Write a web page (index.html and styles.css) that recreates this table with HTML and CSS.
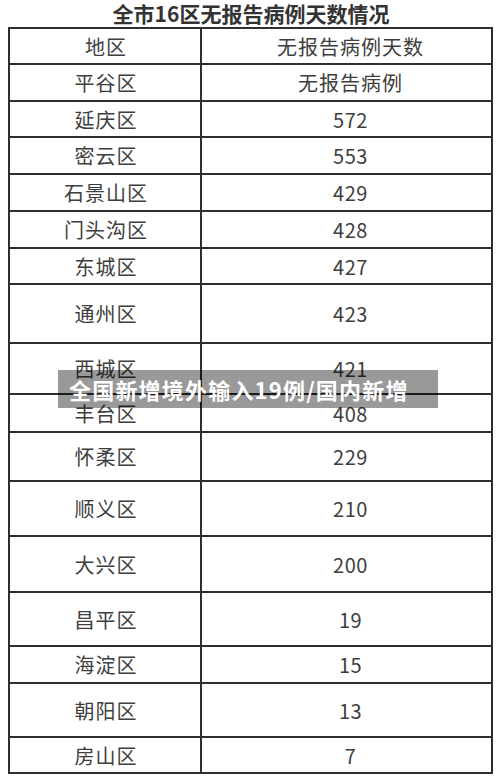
FILE: index.html
```html
<!DOCTYPE html>
<html lang="zh-CN">
<head>
<meta charset="utf-8">
<title>全市16区无报告病例天数情况</title>
<link rel="stylesheet" href="styles.css">
</head>
<body>
<div class="page">
  <h1 class="title">全市16区无报告病例天数情况</h1>
  <div class="table">
    <div class="cell name">地区</div><div class="cell val">无报告病例天数</div>
    <div class="cell name">平谷区</div><div class="cell val">无报告病例</div>
    <div class="cell name">延庆区</div><div class="cell val num">572</div>
    <div class="cell name">密云区</div><div class="cell val num">553</div>
    <div class="cell name">石景山区</div><div class="cell val num">429</div>
    <div class="cell name">门头沟区</div><div class="cell val num">428</div>
    <div class="cell name">东城区</div><div class="cell val num">427</div>
    <div class="cell name">通州区</div><div class="cell val num">423</div>
    <div class="cell name">西城区</div><div class="cell val num">421</div>
    <div class="cell name">丰台区</div><div class="cell val num">408</div>
    <div class="cell name">怀柔区</div><div class="cell val num">229</div>
    <div class="cell name">顺义区</div><div class="cell val num">210</div>
    <div class="cell name">大兴区</div><div class="cell val num">200</div>
    <div class="cell name">昌平区</div><div class="cell val num">19</div>
    <div class="cell name">海淀区</div><div class="cell val num">15</div>
    <div class="cell name">朝阳区</div><div class="cell val num">13</div>
    <div class="cell name last">房山区</div><div class="cell val num last">7</div>
  </div>
  <div class="caption">全国新增境外输入19例/国内新增</div>
</div>
</body>
</html>
```

FILE: styles.css
```css
* { box-sizing: border-box; }
html, body {
  margin: 0;
  padding: 0;
  background: #ffffff;
}
body {
  font-family: "Noto Sans CJK SC", "Noto Sans", sans-serif;
  color: #3c3c3c;
}
.page {
  position: relative;
  width: 500px;
  height: 780px;
  overflow: hidden;
}
.title {
  margin: 0;
  height: 27px;
  font-size: 21px;
  line-height: 27px;
  font-weight: 700;
  text-align: center;
  color: #333333;
  padding-left: 2px;
}
.table {
  margin-left: 8px;
  width: 485px;
  border: 2px solid #2e2e2e;
  display: grid;
  grid-template-columns: 192px 1fr;
  grid-template-rows: 36px 37px 36px 37px 37px 37px 36px 59px 51px 38px 49px 55px 56px 54px 37px 54px 34px;
}
.cell {
  display: flex;
  align-items: center;
  justify-content: center;
  border-bottom: 2px solid #2e2e2e;
  font-size: 20px;
  color: #3e3e3e;
  letter-spacing: 1px;
}
.name {
  border-right: 2px solid #2e2e2e;
  padding-left: 2px;
}
.val {
  padding-left: 8px;
}
.num {
  letter-spacing: 0.5px;
}
.cell.last {
  border-bottom: none;
}
.caption {
  position: absolute;
  left: 58px;
  top: 370px;
  width: 380px;
  height: 38px;
  padding-left: 11px;
  background: rgba(0, 0, 0, 0.4);
  color: #ffffff;
  font-size: 22px;
  font-weight: 700;
  line-height: 38px;
  letter-spacing: 1.2px;
  white-space: nowrap;
}
```
